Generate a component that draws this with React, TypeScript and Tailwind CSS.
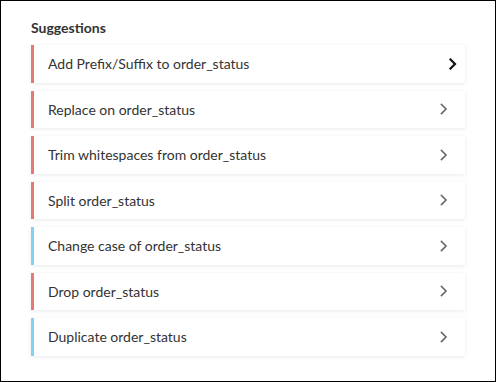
import React from "react";

const items = [
  { label: "Add Prefix/Suffix to order_status", color: "red", active: true },
  { label: "Replace on order_status", color: "red" },
  { label: "Trim whitespaces from order_status", color: "red" },
  { label: "Split order_status", color: "red" },
  { label: "Change case of order_status", color: "blue" },
  { label: "Drop order_status", color: "red" },
  { label: "Duplicate order_status", color: "blue" },
];

const Chevron = ({ active }: { active?: boolean }) => (
  <svg width="8" height="12" viewBox="0 0 8 12" fill="none">
    <path
      d="M1.5 1.5 L6 6 L1.5 10.5"
      stroke={active ? "#111" : "#666"}
      strokeWidth={active ? 2.2 : 1.6}
      strokeLinecap="square"
    />
  </svg>
);

export default function App() {
  return (
    <div
      className="w-[496px] h-[382px] border border-black bg-white pl-[30px] pr-[30px] pt-[18px]"
      style={{ fontFamily: "Lato, 'Open Sans', sans-serif" }}
    >
      <h2 className="text-[14px] font-bold text-[#333] leading-[18px] mb-[8px]">
        Suggestions
      </h2>
      <div className="flex flex-col gap-[8px] w-[434px]">
        {items.map((it) => (
          <div
            key={it.label}
            className={`flex items-center justify-between h-[37.5px] bg-white border-l-[3px] pl-[14px] shadow-[0_1px_4px_rgba(0,0,0,0.09)] ${
              it.color === "red" ? "border-[#e47a78]" : "border-[#86d0f5]"
            } ${it.active ? "pr-[8px]" : "pr-[17px]"}`}
          >
            <span className="text-[14px] text-[#333]">{it.label}</span>
            <Chevron active={it.active} />
          </div>
        ))}
      </div>
    </div>
  );
}
